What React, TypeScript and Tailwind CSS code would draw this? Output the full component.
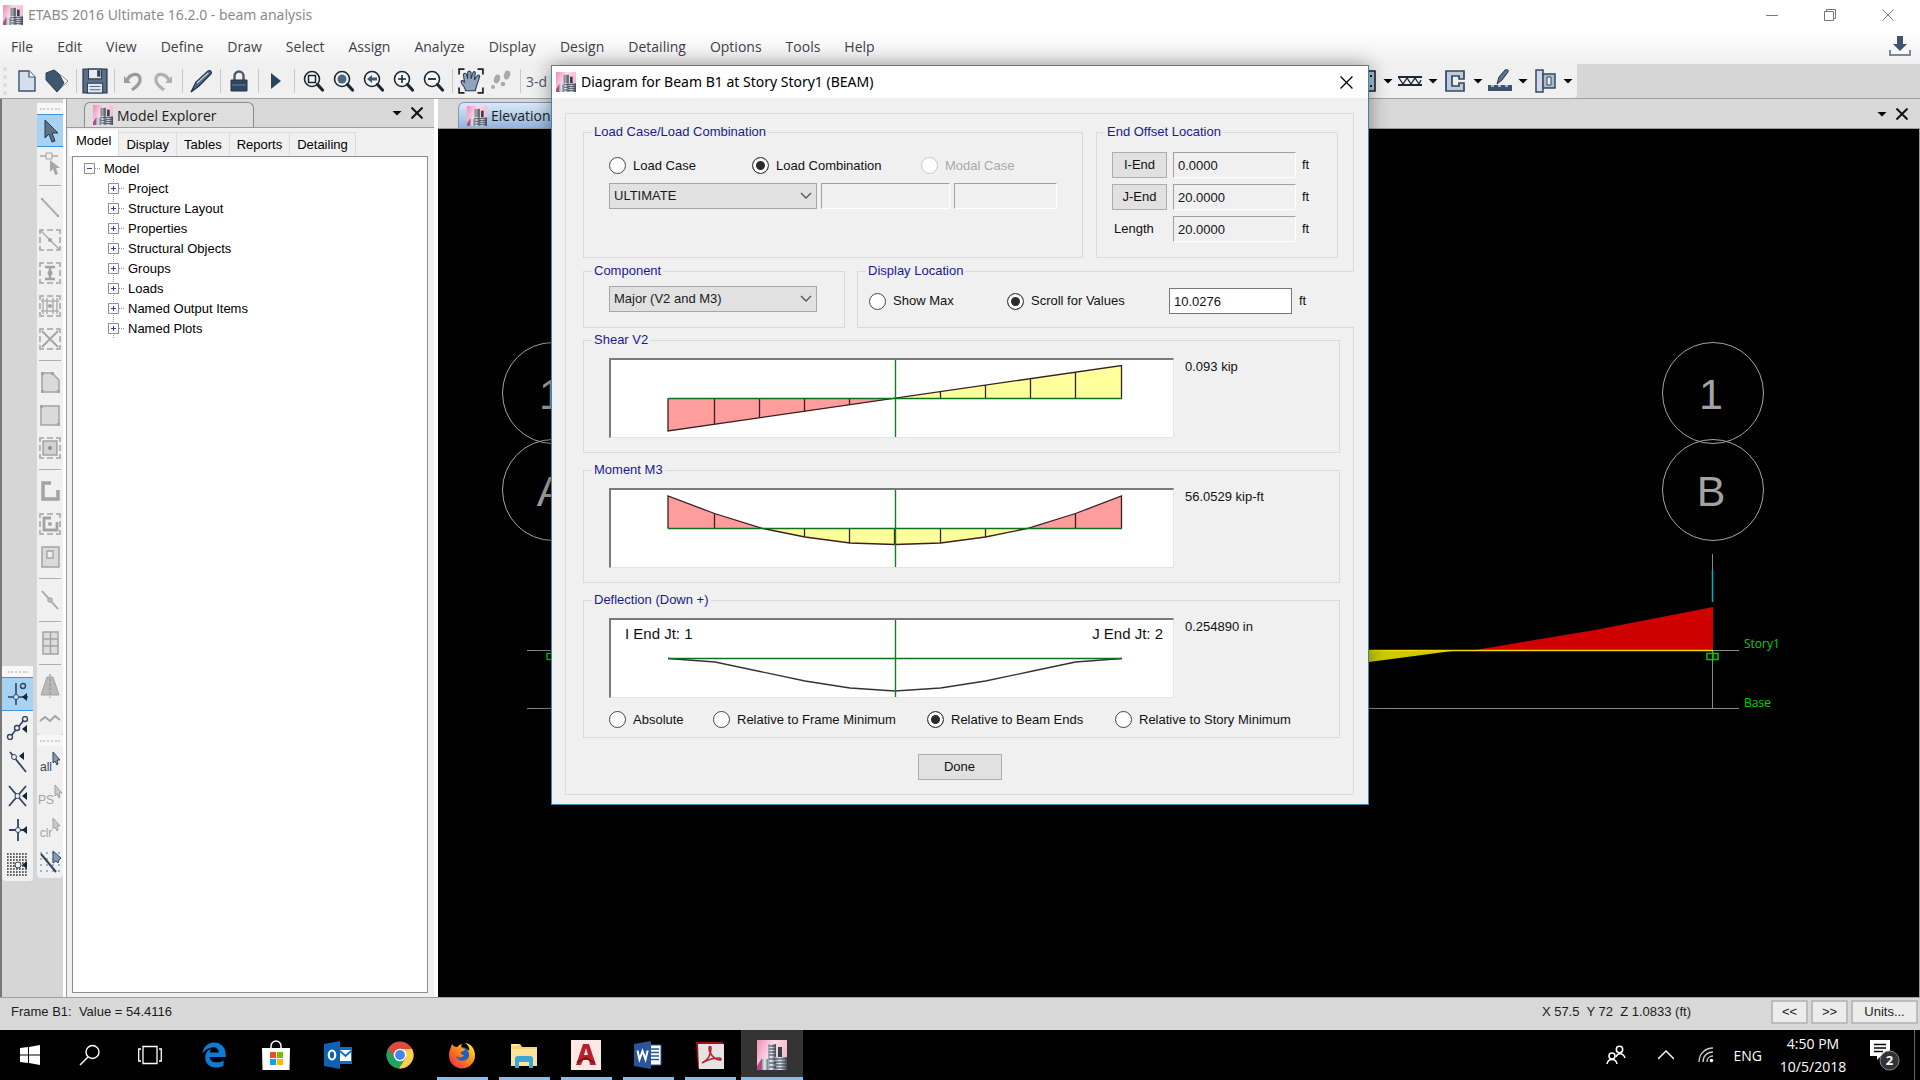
import type { ReactNode } from "react";
import { clsx } from "clsx";
import { FaEdgeLegacy } from "react-icons/fa6";

const MENUS = [
  "File", "Edit", "View", "Define", "Draw", "Select", "Assign", "Analyze",
  "Display", "Design", "Detailing", "Options", "Tools", "Help",
];
const EXPLORER_TABS = ["Model", "Display", "Tables", "Reports", "Detailing"];
const TREE_ITEMS = [
  "Project", "Structure Layout", "Properties", "Structural Objects",
  "Groups", "Loads", "Named Output Items", "Named Plots",
];

const NAVY = "#2f4560";
const GRAY = "#a3a3a3";

interface IconProps {
  children: ReactNode;
  size?: string;
  box?: string;
}

function Icon({ children, size = "h-6 w-6", box = "0 0 24 24" }: IconProps) {
  return (
    <svg viewBox={box} className={clsx("shrink-0", size)} fill="none" aria-hidden="true">
      {children}
    </svg>
  );
}

function EtabsLogo({ size = "h-5 w-5" }: { size?: string }) {
  return (
    <Icon size={size} box="0 0 30 30">
      <defs>
        <linearGradient id="logoPink" x1="0" y1="0" x2="1" y2="0.4">
          <stop offset="0" stopColor="#f08cb8" />
          <stop offset="0.5" stopColor="#fbdbe8" />
          <stop offset="1" stopColor="#f7b9d0" />
        </linearGradient>
        <linearGradient id="logoTower" x1="0" y1="0" x2="1" y2="0">
          <stop offset="0" stopColor="#8f9dad" />
          <stop offset="0.4" stopColor="#e8edf2" />
          <stop offset="1" stopColor="#4a525e" />
        </linearGradient>
      </defs>
      <rect width="30" height="30" fill="url(#logoPink)" />
      <path d="M0 26L5 18V30H0Z" fill="#b14c86" />
      <rect x="5" y="19" width="7" height="11" fill="url(#logoTower)" />
      <rect x="11" y="4" width="8" height="26" fill="url(#logoTower)" />
      <rect x="21" y="7" width="4" height="23" fill="#39404d" />
      <path d="M18 17h12v13H18z" fill="url(#logoTower)" />
      <path d="M12 6h7M12 9h7M12 12h7M12 15h7M12 19h7M12 23h7M12 27h7M18 19h12M18 22h12M18 25h12M18 28h12" stroke="#333b48" strokeWidth="1.2" />
    </Icon>
  );
}

function Caret() {
  return (
    <Icon size="h-2 w-3" box="0 0 12 8">
      <path d="M1.500 2h9L6 6.500Z" fill="#000" />
    </Icon>
  );
}

function Cross({ size = "h-3 w-3", color = "#111", width = 1.2 }: { size?: string; color?: string; width?: number }) {
  return (
    <Icon size={size} box="0 0 12 12">
      <path d="M0.500 0.500L11.500 11.500M11.500 0.500L0.500 11.500" stroke={color} strokeWidth={width} />
    </Icon>
  );
}

function Magnifier({ children }: { children: ReactNode }) {
  return (
    <Icon>
      <circle cx="11" cy="10" r="7.500" fill="#f4f7fa" stroke="#1d2733" strokeWidth="1.600" />
      <path d="M16.500 15.500L21.500 21" stroke="#1d2733" strokeWidth="3.200" strokeLinecap="round" />
      {children}
    </Icon>
  );
}

const MAIN_TOOLS: { name: string; icon: ReactNode; slot?: string; endsGroup?: boolean }[] = [
  {
    name: "New model",
    icon: <Icon><path d="M4 2h10l6 6v14H4z" fill="#d5dfeb" stroke="#3c536e" strokeWidth="1.400" /><path d="M14 2v6h6" fill="#fff" stroke="#3c536e" strokeWidth="1.200" /></Icon>,
  },
  {
    name: "Open",
    icon: <Icon><path d="M9 1l14 11-11 11-3-6z" fill="#f5f8fb" stroke="#7e90a3" /><path d="M1 4l8-3 5 4 5 9-7 9L1 11z" fill="#3f566f" stroke="#2b3e54" /></Icon>,
    endsGroup: true,
  },
  {
    name: "Save",
    icon: <Icon size="h-[26px] w-[26px]"><path d="M1 1h22v22H1z" fill="#5a7089" stroke="#2c3f55" strokeWidth="1.300" /><path d="M6 1h12v9H6z" fill="#e4ebf2" stroke="#2c3f55" /><path d="M14 2h3v6h-3z" fill="#2c3f55" /><path d="M5 14h14v9H5z" fill="#dfe7ef" stroke="#2c3f55" /><path d="M7 17h10M7 20h10" stroke="#5a7089" /></Icon>,
    endsGroup: true,
  },
  {
    name: "Undo",
    icon: <Icon><path d="M3 7v7h7z" fill="#9b9b9b" /><path d="M6 12C8 5 17 3 19 9c1 5-3 8-8 12" stroke="#9b9b9b" strokeWidth="3.200" /></Icon>,
  },
  {
    name: "Redo",
    icon: <Icon><path d="M21 7v7h-7z" fill="#b0b0b0" /><path d="M18 12C16 5 7 3 5 9c-1 5 3 8 8 12" stroke="#b0b0b0" strokeWidth="3.200" /></Icon>,
    endsGroup: true,
  },
  {
    name: "Edit",
    icon: <Icon><path d="M2 23l5-10L19 2c3-1 4 1 3 3L10 17z" fill="#516a85" stroke="#1d2f44" strokeWidth="1.200" /><path d="M8 14L19 4" stroke="#b9c8d8" strokeWidth="1.600" /></Icon>,
    endsGroup: true,
  },
  {
    name: "Lock model",
    icon: <Icon><path d="M7.500 11V7a4.500 4.500 0 019 0v4" stroke="#4e5a68" strokeWidth="2.400" /><path d="M4 11h16v11H4z" fill="#31465f" stroke="#22344a" /><path d="M5 16h14" stroke="#5b728c" strokeWidth="1.400" /></Icon>,
    endsGroup: true,
  },
  {
    name: "Run analysis",
    icon: <Icon><path d="M7 4l10 8-10 8z" fill="#29445f" /></Icon>,
    slot: "w-7",
    endsGroup: true,
  },
  { name: "Rubber band zoom", icon: <Magnifier><path d="M7.500 6.500h7v7h-7z" stroke="#1d2733" strokeWidth="1.500" /></Magnifier> },
  { name: "Full view", icon: <Magnifier><circle cx="11" cy="10" r="4.500" fill="#4d6580" /></Magnifier> },
  { name: "Previous zoom", icon: <Magnifier><path d="M6 10l5-4v2.500h5v3h-5V14z" fill="#3f5873" /></Magnifier> },
  { name: "Zoom in", icon: <Magnifier><path d="M7 10h8M11 6v8" stroke="#1d2733" strokeWidth="1.600" /></Magnifier> },
  { name: "Zoom out", icon: <Magnifier><path d="M7 10h8" stroke="#1d2733" strokeWidth="1.800" /></Magnifier>, endsGroup: true },
  {
    name: "Pan",
    icon: (
      <Icon size="h-[26px] w-[26px]">
        <path d="M1 6V1h5M18 1h5v5M23 18v5h-5M6 23H1v-5" stroke="#222" strokeWidth="1.600" />
        <path d="M7 21c0-4-5-6-4-9 1-1 2 0 3 1L5 6c1-2 2-1 3 0l1 4V4c1-2 2-1 3 0v6l2-6c1-1 2-1 2 1l-1 6 3-4c1-1 2 0 2 1l-3 9-1 4z" fill="#8fa4bb" stroke="#2b3d52" />
      </Icon>
    ),
  },
  {
    name: "Walk",
    icon: <Icon><g fill="#a9a9a9"><ellipse cx="8" cy="10" rx="3" ry="4.500" transform="rotate(20 8 10)" /><circle cx="4" cy="18" r="2" /><ellipse cx="18" cy="6" rx="3" ry="4.500" transform="rotate(20 18 6)" /><circle cx="14" cy="15" r="2.300" /></g></Icon>,
    endsGroup: true,
  },
];

const DRAW_TOOLS: { name: string; icon: ReactNode }[] = [
  { name: "Frame section", icon: <Icon><path d="M4 2h18v20H4z" fill="#a9c0d4" stroke="#16202c" strokeWidth="1.600" /><path d="M17 6h2v2h-2zM17 16h2v2h-2z" fill="#16202c" /></Icon> },
  { name: "Joist", icon: <Icon><path d="M0 8h24M0 16h24" stroke="#1c2733" strokeWidth="2" /><path d="M1 9l4 6 4-6 4 6 4-6 4 6 2-4" stroke="#1c2733" strokeWidth="1.300" /></Icon> },
  { name: "Channel", icon: <Icon><path d="M3 2h18v8h-5V7H9v10h7v-3h5v8H3z" fill="#bcccdc" stroke="#34485f" strokeWidth="1.700" /></Icon> },
  { name: "Wall pen", icon: <Icon><path d="M9 15l2-7 6-7c2-1 4 0 3 2l-6 8z" fill="#5d748d" stroke="#22344a" /><path d="M0 16h24v6H0z" fill="#3b536f" /><path d="M3 17h3M10 17h3M17 17h3" stroke="#c8d5e2" strokeWidth="1.400" /></Icon> },
  { name: "Panel", icon: <Icon><path d="M3 1h7v22H3z" fill="#d2d8ea" stroke="#34485f" strokeWidth="1.500" /><path d="M10 5h12v14H10z" fill="#a9bccd" stroke="#34485f" strokeWidth="1.500" /><path d="M14 8h4v8h-4z" fill="#e8eef4" stroke="#34485f" /></Icon> },
];

const DASHED_BOX = <path d="M2 6V2h4M9 2h6M18 2h4v4M22 9v6M22 18v4h-4M15 22H9M6 22H2v-4M2 15V9" stroke={GRAY} strokeWidth="1.500" />;

type SideTool = { name: string; icon: ReactNode; active?: boolean } | "separator";

const SIDE_TOOLS: SideTool[] = [
  { name: "Select", active: true, icon: <Icon><path d="M7 1v18l4-4 3 8 3-1-3-8h6z" fill="#5f7387" stroke="#2a3947" /></Icon> },
  { name: "Reshape", icon: <Icon><path d="M2 4h18" stroke={GRAY} strokeWidth="1.400" /><path d="M8 1h6v6H8z" fill="#eee" stroke={GRAY} /><path d="M12 8v12l3-3 2 6 3-1-2-6h4z" fill="#a8a8a8" /></Icon> },
  "separator",
  { name: "Draw line", icon: <Icon><path d="M4 4l16 17" stroke="#b0b0b0" strokeWidth="2" /><path d="M3 3h2v2H3zM19 20h2v2h-2z" fill={GRAY} /></Icon> },
  { name: "Quick line", icon: <Icon>{DASHED_BOX}<path d="M3 3l18 18" stroke="#adadad" strokeWidth="1.600" /><circle cx="12" cy="12" r="2" fill={GRAY} /></Icon> },
  { name: "Quick column", icon: <Icon>{DASHED_BOX}<path d="M7 6h10M7 18h10M12 6v12" stroke={GRAY} strokeWidth="2.400" /><circle cx="12" cy="12" r="2.500" fill={GRAY} /></Icon> },
  { name: "Secondary beams", icon: <Icon>{DASHED_BOX}<path d="M5 4v16M9 4v16M15 4v16M19 4v16M3 7h18M3 17h18" stroke="#b0b0b0" strokeWidth="1.500" /><circle cx="12" cy="12" r="2" fill={GRAY} /></Icon> },
  { name: "Brace", icon: <Icon>{DASHED_BOX}<path d="M4 4l16 16M20 4L4 20" stroke={GRAY} strokeWidth="1.800" /></Icon> },
  "separator",
  { name: "Draw floor", icon: <Icon><path d="M4 3h10l7 7v12H4z" fill="#dadada" stroke={GRAY} strokeWidth="1.500" /><path d="M3 2h3v3H3zM13 2h3v3h-3zM3 20h3v3H3zM19 20h3v3h-3z" fill={GRAY} /></Icon> },
  { name: "Rectangular floor", icon: <Icon><path d="M3 3h18v19H3z" fill="#dadada" stroke={GRAY} strokeWidth="1.500" /><path d="M2 2h3v3H2zM19 20h3v3h-3z" fill={GRAY} /></Icon> },
  { name: "Quick floor", icon: <Icon>{DASHED_BOX}<path d="M5 5h14v14H5z" fill="#d2d2d2" stroke={GRAY} strokeWidth="1.500" /><circle cx="12" cy="12" r="2" fill="#8c8c8c" /></Icon> },
  "separator",
  { name: "Draw wall", icon: <Icon><path d="M13 4H5v16h15v-9" stroke={GRAY} strokeWidth="3.500" /></Icon> },
  { name: "Quick wall", icon: <Icon>{DASHED_BOX}<path d="M13 6H6v12h13v-8" stroke={GRAY} strokeWidth="2.800" /><circle cx="12" cy="12" r="2" fill={GRAY} /></Icon> },
  { name: "Wall opening", icon: <Icon><path d="M4 2h17v20H4z" fill="#dadada" stroke={GRAY} strokeWidth="1.500" /><path d="M9 6h6v7H9z" fill="#eee" stroke={GRAY} strokeWidth="1.300" /></Icon> },
  "separator",
  { name: "Link", icon: <Icon><path d="M4 3l16 18" stroke={GRAY} strokeWidth="1.800" /><circle cx="12" cy="12" r="2.300" fill="#bbb" stroke={GRAY} /></Icon> },
  "separator",
  { name: "Grid", icon: <Icon><path d="M5 1h15v22H5zM5 8h15M5 15h15M12.500 1v22" fill="#ddd" stroke={GRAY} strokeWidth="1.500" /></Icon> },
  "separator",
  { name: "Tower", icon: <Icon><path d="M9 3h6l6 18H3z" fill="#b9b9b9" stroke={GRAY} /><path d="M12 0v24" stroke="#8c8c8c" strokeDasharray="3 1.500" /></Icon> },
  { name: "Wave", icon: <Icon><path d="M2 14l5-4 5 4 5-5 5 4" stroke={GRAY} strokeWidth="2" /></Icon> },
];

// Small cursor beside a short caption, used by the selection buttons.
function PickIcon({ label, color }: { label: string; color: string }) {
  return (
    <span className="flex h-6 w-6 items-end justify-center">
      <span className="text-[12px] leading-4" style={{ color }}>{label}</span>
      <Icon size="h-4 w-2 self-start" box="0 0 8 16">
        <path d="M1 1v11l2-2 2 4 1-1-1-4h3z" fill={color} fillOpacity="0.5" stroke={color} />
      </Icon>
    </span>
  );
}

const SELECT_TOOLS: SideTool[] = [
  { name: "Select all", icon: <PickIcon label="all" color={NAVY} /> },
  { name: "Previous selection", icon: <PickIcon label="PS" color={GRAY} /> },
  { name: "Clear selection", icon: <PickIcon label="clr" color={GRAY} /> },
  { name: "Intersecting line", icon: <Icon><path d="M2 3h20M2 9h20M2 15h20M2 21h20" stroke="#9db4cc" strokeWidth="2" strokeDasharray="2 4" /><path d="M3 4l15 18" stroke={NAVY} strokeWidth="2" /><path d="M15 1v12l3-2 2 2 1-3 2-2z" fill="#7f9bb8" stroke={NAVY} /></Icon> },
];

const SNAP_TOOLS: SideTool[] = [
  { name: "Snap to grid", active: true, icon: <Icon><path d="M10 1v22M2 15h20" stroke={NAVY} strokeWidth="1.600" /><circle cx="17" cy="4" r="2.500" stroke={NAVY} strokeWidth="1.400" /><circle cx="10" cy="15" r="2.500" fill="#cfe5fa" stroke={NAVY} /><path d="M16 15l5-4v8z" fill="#16263a" /></Icon> },
  { name: "Snap to ends", icon: <Icon><path d="M4 21L18 4" stroke={NAVY} strokeWidth="1.600" /><g fill="#f0f0f0" stroke={NAVY} strokeWidth="1.400"><circle cx="4" cy="21" r="2.500" /><circle cx="11" cy="12" r="2.500" /><circle cx="19" cy="3" r="2.500" /></g><path d="M16 13l5-4v8z" fill="#16263a" /></Icon> },
  { name: "Snap to line", icon: <Icon><path d="M4 2l16 20" stroke={NAVY} strokeWidth="1.800" /><circle cx="8" cy="7" r="2.500" fill="#f0f0f0" stroke={NAVY} /><path d="M13 6l5-4v8z" fill="#16263a" /></Icon> },
  { name: "Snap to intersection", icon: <Icon><path d="M3 2l17 20M20 2L3 22" stroke={NAVY} strokeWidth="1.800" /><circle cx="11.500" cy="12" r="2.500" fill="#f0f0f0" stroke={NAVY} /><path d="M16 12l5-4v8z" fill="#16263a" /></Icon> },
  { name: "Snap to perpendicular", icon: <Icon><path d="M12 1v22M3 12h18" stroke={NAVY} strokeWidth="1.800" /><circle cx="12" cy="12" r="2.500" fill="#f0f0f0" stroke={NAVY} /><path d="M16 12l5-4v8z" fill="#16263a" /></Icon> },
  { name: "Snap to fine grid", icon: <Icon><path d="M1 2h21M1 5h21M1 8h21M1 11h21M1 14h21M1 17h21M1 20h21M1 23h21" stroke="#333" strokeWidth="1.700" strokeDasharray="1.700 1.300" /><circle cx="12" cy="13" r="3" fill="#f0f0f0" stroke={NAVY} /><path d="M16 13l5-4v8z" fill="#16263a" /></Icon> },
];

function ToolColumn({ tools, slot }: { tools: SideTool[]; slot: string }) {
  return (
    <div className="flex flex-col rounded-b bg-[#f0f0f0]">
      <div className="flex h-[11px] items-center justify-center bg-[#f7f7f7]">
        <div className="w-5 border-t-2 border-dotted border-[#cfcfcf]" />
      </div>
      {tools.map((tool, i) =>
        tool === "separator" ? (
          <div key={i} className="flex h-2.5 items-center px-0.5">
            <div className="w-full border-t border-[#b0b0b0]" />
          </div>
        ) : (
          <button
            key={i}
            type="button"
            aria-label={tool.name}
            className={clsx(
              "flex items-center justify-center border-y",
              slot,
              tool.active ? "border-[#3d93d8] bg-[#a8d2f2]" : "border-transparent",
            )}
          >
            {tool.icon}
          </button>
        ),
      )}
    </div>
  );
}

function TitleBar() {
  return (
    <header className="flex h-[30px] items-center bg-white pl-[3px] font-['Noto_Sans',sans-serif]">
      <EtabsLogo />
      <h1 className="ml-[5px] flex-1 text-[14px] leading-5 text-[#8b8b8b]">ETABS 2016 Ultimate 16.2.0 - beam analysis</h1>
      <div className="flex items-center pr-[3px]">
        <button type="button" aria-label="Minimize" className="flex h-7 w-[58px] items-center justify-center">
          <span className="w-3 border-t border-[#777]" />
        </button>
        <button type="button" aria-label="Restore" className="flex h-7 w-[58px] items-center justify-center">
          <Icon size="h-3 w-3" box="0 0 12 12">
            <path d="M0.500 2.500h9v9h-9zM2.500 2.500v-2h9v9h-2" stroke="#777" />
          </Icon>
        </button>
        <button type="button" aria-label="Close" className="flex h-7 w-[58px] items-center justify-center">
          <Cross color="#777" width={1} />
        </button>
      </div>
    </header>
  );
}

function MenuBar() {
  return (
    <nav className="flex h-[34px] items-center gap-6 bg-linear-to-b from-white to-[#f0f0f0] pr-2 pb-0.5 pl-[11px] font-['Open_Sans',sans-serif] text-[14px] text-[#443c4a]">
      {MENUS.map((menu) => (
        <button key={menu} type="button">{menu}</button>
      ))}
      <button type="button" aria-label="Download" className="ml-auto">
        <Icon>
          <path d="M9 2h6v8h4l-7 7-7-7h4z" fill="#3e5470" />
          <path d="M2 16v5h20v-5" stroke="#7b8796" strokeWidth="2" />
        </Icon>
      </button>
    </nav>
  );
}

function Toolbar() {
  return (
    <div className="flex h-[35px] border-b border-[#9f9f9f] bg-[#d6d6d6]">
      <div className="flex flex-1 items-center rounded-br bg-[#f0f0f0]">
        <div className="ml-[3px] h-7 w-[9px] border-l-4 border-dotted border-[#dcdcdc]" />
        {MAIN_TOOLS.map((tool) => (
          <div key={tool.name} className="flex items-center">
            <button type="button" aria-label={tool.name} className={clsx("flex h-8 items-center justify-center", tool.slot ?? "w-[30px]")}>
              {tool.icon}
            </button>
            {tool.endsGroup && (
              <div className="flex w-2 justify-center">
                <div className="h-6 w-px bg-[#c9c9c9]" />
              </div>
            )}
          </div>
        ))}
        <button type="button" className="ml-0.5 font-['Open_Sans',sans-serif] text-[14px] text-[#4c5a6b]">3-d</button>
        <div className="ml-auto flex">
          {DRAW_TOOLS.map((tool) => (
            <button key={tool.name} type="button" aria-label={tool.name} className="flex items-center">
              <span className="flex w-[26px] justify-center">{tool.icon}</span>
              <span className="flex w-[19px] justify-center"><Caret /></span>
            </button>
          ))}
        </div>
      </div>
      <div className="w-[343px]" />
    </div>
  );
}

function TreeToggle({ open }: { open?: boolean }) {
  return (
    <Icon size="h-5 w-5" box="0 0 20 20">
      {!open && <path d="M5.500 0v20" stroke="#999" strokeDasharray="1 1" />}
      <path d="M0.500 4.500h10v10h-10z" fill="#fafafa" stroke="#8f8f8f" />
      <path d={open ? "M3 9.500h5" : "M3 9.500h5M5.500 7v5"} stroke="#2c4a9a" />
      <path d="M11 9.500h5" stroke="#999" strokeDasharray="1 1" />
    </Icon>
  );
}

function ModelExplorer() {
  return (
    <aside className="flex w-[368px] shrink-0 flex-col border-l border-[#9a9a9a] bg-[#f0f0f0]">
      <div className="flex h-[29px] items-end border-b border-[#9a9a9a] bg-[#d8d8d8] pl-[17px]">
        <div className="flex h-[25px] w-[170px] items-center gap-1 rounded-t-md border border-b-0 border-[#8a8a8a] bg-[#dedede] pl-2 font-['Open_Sans',sans-serif] text-[14px] text-[#1c1c1c]">
          <EtabsLogo />
          Model Explorer
        </div>
        <div className="ml-auto flex h-full items-center gap-2 pr-[11px]">
          <button type="button" aria-label="Window options"><Caret /></button>
          <button type="button" aria-label="Close panel"><Cross width={2} /></button>
        </div>
      </div>
      <div className="flex h-7 items-end pl-0.5 text-[13px] text-black">
        {EXPLORER_TABS.map((tab, i) => (
          <button
            key={tab}
            type="button"
            className={clsx(
              "border-r border-[#dcdcdc] px-[7px]",
              i === 0 ? "h-[26px] bg-white pb-1" : "h-6 border-t",
            )}
          >
            {tab}
          </button>
        ))}
      </div>
      <div className="mr-1.5 mb-1 ml-[5px] flex-1 border border-[#8a8d94] bg-white pt-0.5 pl-[11px] text-[13px] leading-5 text-black">
        <div className="flex items-center"><TreeToggle open />Model</div>
        <ul className="ml-6">
          {TREE_ITEMS.map((item) => (
            <li key={item} className="flex items-center"><TreeToggle />{item}</li>
          ))}
        </ul>
      </div>
    </aside>
  );
}

function GridBubble({ x, y, label }: { x: number; y: number; label: string }) {
  return (
    <g>
      <circle cx={x} cy={y} r="50.500" stroke="#a6a6a6" fill="none" />
      <text x={x - 2} y={y + 16} fontSize="43" textAnchor="middle" fill="#a3a3a3">{label}</text>
    </g>
  );
}

function ElevationView() {
  return (
    <section className="flex min-w-0 flex-1 flex-col">
      <div className="flex h-[30px] items-end border-b border-[#9a9a9a] bg-[#d8d8d8] pl-5">
        <div className="flex h-[26px] w-[190px] items-center gap-1 rounded-t-md border border-b-0 border-[#8197b3] bg-linear-to-b from-[#dbe9f8] to-[#92b4dc] pl-2 font-['Open_Sans',sans-serif] text-[14px] text-[#1c1c1c]">
          <EtabsLogo />
          Elevation
        </div>
        <div className="ml-auto flex h-full items-center gap-2 pr-3">
          <button type="button" aria-label="View options"><Caret /></button>
          <button type="button" aria-label="Close view"><Cross width={2} /></button>
        </div>
      </div>
      <div className="min-h-0 flex-1 border-r border-[#9a9a9a] bg-black">
        <svg viewBox="438 129 1481 868" className="h-full w-full" fill="none" fontFamily="Liberation Sans, sans-serif">
          <GridBubble x={553} y={393} label="1" />
          <GridBubble x={553} y={490} label="A" />
          <GridBubble x={1713} y={393} label="1" />
          <GridBubble x={1713} y={490} label="B" />
          <path d="M527 650.500H1739M527 708.500H1739M1712.500 554V570M1712.500 651V708" stroke="#8a8a8a" />
          <path d="M1712.500 570V602" stroke="#00b4b4" strokeWidth="1.500" />
          <path d="M1475 650L1595 630 1713 607V650Z" fill="#cf0000" />
          <path d="M1280 650H1460L1369 662 1280 668Z" fill="#cdcb00" />
          <path d="M553 650.500H1713" stroke="#f0d800" strokeWidth="1.500" />
          <g stroke="#00c800" strokeWidth="1.500">
            <path d="M547 653.500h11v6h-11zM1707 653.500h11v6h-11zM1713 652v9" />
          </g>
          <g fontSize="12" fontFamily="Open Sans, sans-serif" fill="#00d400">
            <text x="1744" y="648">Story1</text>
            <text x="1744" y="707">Base</text>
          </g>
        </svg>
      </div>
    </section>
  );
}

interface RadioProps {
  name: string;
  label: string;
  checked?: boolean;
  disabled?: boolean;
}

function Radio({ name, label, checked, disabled }: RadioProps) {
  return (
    <label className={clsx("flex items-center gap-[7px] whitespace-nowrap", disabled && "text-[#a9a9a9]")}>
      <input
        type="radio"
        name={name}
        defaultChecked={checked}
        disabled={disabled}
        className="h-[17px] w-[17px] shrink-0 appearance-none rounded-full border border-[#444] bg-white checked:bg-[#2b2b2b] checked:shadow-[inset_0_0_0_3px_white] disabled:border-[#c6c6c6]"
      />
      {label}
    </label>
  );
}

interface GroupProps {
  title: string;
  className?: string;
  body?: string;
  children: ReactNode;
}

function Group({ title, className, body, children }: GroupProps) {
  return (
    <fieldset className={clsx("min-w-0 border border-[#dadada]", className)}>
      <legend className="ml-2 px-0.5 leading-4 text-[#1a1a8c]">{title}</legend>
      <div className={body}>{children}</div>
    </fieldset>
  );
}

function Dropdown({ label, value }: { label: string; value: string }) {
  return (
    <div className="relative h-[26px] w-[208px] shrink-0">
      <select aria-label={label} className="h-full w-full appearance-none border border-[#a6a6a6] bg-[#e1e1e1] pl-1 leading-5 text-[#1a1a1a]">
        <option>{value}</option>
      </select>
      <svg viewBox="0 0 12 8" className="pointer-events-none absolute top-[9px] right-[5px] h-2 w-3" fill="none">
        <path d="M1 1l5 5 5-5" stroke="#555" strokeWidth="1.400" />
      </svg>
    </div>
  );
}

const SUNKEN = "h-[26px] border border-t-[#a0a0a0] border-r-white border-b-white border-l-[#a0a0a0] bg-[#f0f0f0] px-1";
const PUSH_BUTTON = "h-[26px] border border-[#adadad] bg-[#e1e1e1]";

function Plot({ label, children }: { label: string; children: ReactNode }) {
  return (
    <svg
      viewBox="2 2 562 77"
      role="img"
      aria-label={label}
      className="h-20 w-[565px] border-t-2 border-r border-b border-l-2 border-t-[#7a7a7a] border-r-[#e3e3e3] border-b-[#e3e3e3] border-l-[#7a7a7a] bg-white"
      fill="none"
    >
      {children}
      <path d="M286.500 0V80" stroke="#0f8020" strokeWidth="1.400" />
    </svg>
  );
}

interface ResultGroupProps {
  title: string;
  value: string;
  plot: ReactNode;
  className?: string;
  children?: ReactNode;
}

function ResultGroup({ title, value, plot, className, children }: ResultGroupProps) {
  return (
    <Group title={title} className={clsx("mr-[13px] ml-[17px]", className)} body="pt-2.5 pl-[25px]">
      <div className="flex gap-[11px]">
        {plot}
        <output className="leading-[18px]">{value}</output>
      </div>
      {children}
    </Group>
  );
}

function ShearPlot() {
  return (
    <Plot label="Shear V2 diagram">
      <path d="M59 40.500V73L286 40.500Z" fill="#ff9c9c" />
      <path d="M286 40.500L513 7.500V40.500Z" fill="#ffff9c" />
      <path d="M59 40.500V73L512.500 7.500V40.500M105.500 40.500V66M150.500 40.500V60M195.500 40.500V53.500M240.500 40.500V47M331.500 40.500V34M376.500 40.500V27.500M421.500 40.500V21M466.500 40.500V14.500" stroke="#3a2020" strokeWidth="1.300" />
      <path d="M59 40.500H513" stroke="#0f7020" strokeWidth="1.300" />
    </Plot>
  );
}

function MomentPlot() {
  return (
    <Plot label="Moment M3 diagram">
      <path d="M59 40.500V8L106 25.500 154 40.500ZM513 40.500V8L466.500 25.500 418 40.500Z" fill="#ff9c9c" />
      <path d="M154 40.500L196 49 241 55 286 56.500 331.500 55 376.500 49 418 40.500Z" fill="#ffff9c" />
      <path d="M59 40.500V8L105.500 25.500 154 40.500 196 49 241 55 286 56.500 331.500 55 376.500 49 418 40.500 466.500 25.500 512.500 8V40.500M105.500 25.500V40.500M466.500 25.500V40.500M195.500 40.500V49M240.500 40.500V55M285.500 40.500V56.500M331.500 40.500V55M376.500 40.500V49" stroke="#3a2020" strokeWidth="1.300" />
      <path d="M59 40.500H513" stroke="#0f7020" strokeWidth="1.300" />
    </Plot>
  );
}

function DeflectionPlot() {
  return (
    <Plot label="Deflection diagram">
      <path d="M59 40.500L106 44 151 53.500 196 63 241 70 286 73 331.500 70 376.500 63 421.500 53.500 466.500 44 513 40.500" stroke="#333" strokeWidth="1.300" />
      <path d="M59 40.500H513" stroke="#0f7020" strokeWidth="1.300" />
      <g fontSize="15" fontFamily="Liberation Sans, sans-serif" fill="#111">
        <text x="16" y="21">I End Jt: 1</text>
        <text x="554" y="21" textAnchor="end">J End Jt: 2</text>
      </g>
    </Plot>
  );
}

function BeamDialog() {
  return (
    <div
      role="dialog"
      aria-label="Diagram for Beam B1"
      className="absolute top-[65px] left-[551px] w-[818px] border border-[#3f87a8] bg-[#f0f0f0] text-[13px] text-[#111] shadow-[0_0_18px_rgba(0,0,0,0.4)]"
    >
      <div className="flex h-8 items-center gap-[5px] bg-white pr-[15px] pl-1 font-['Noto_Sans',sans-serif] text-[14px] text-black">
        <EtabsLogo />
        <h2 className="flex-1 pb-0.5">Diagram for Beam B1 at Story Story1 (BEAM)</h2>
        <button type="button" aria-label="Close dialog"><Cross size="h-[13px] w-[13px]" color="#000" /></button>
      </div>

      <div className="mt-[15px] mr-[14px] mb-[9px] ml-[13px] flex flex-col border border-[#dcdcdc] pt-2.5 pb-[14px]">
        <div className="flex gap-[13px] pl-[17px]">
          <Group title="Load Case/Load Combination" className="h-[134px] w-[500px]" body="pt-4 pl-[25px]">
            <div className="grid grid-cols-[143px_169px_auto]">
              <Radio name="caseType" label="Load Case" />
              <Radio name="caseType" label="Load Combination" checked />
              <Radio name="caseType" label="Modal Case" disabled />
            </div>
            <div className="mt-[7px] flex gap-1">
              <Dropdown label="Load combination" value="ULTIMATE" />
              <input aria-label="Step type" disabled className={clsx(SUNKEN, "w-[129px]")} />
              <input aria-label="Step number" disabled className={clsx(SUNKEN, "w-[103px]")} />
            </div>
          </Group>
          <Group title="End Offset Location" className="w-[242px]" body="pt-3 pl-[15px]">
            <div className="grid grid-cols-[55px_123px_auto] items-center gap-x-1.5 gap-y-1.5">
              <button type="button" className={PUSH_BUTTON}>I-End</button>
              <input aria-label="I-End offset" readOnly defaultValue="0.0000" className={SUNKEN} />
              <span>ft</span>
              <button type="button" className={PUSH_BUTTON}>J-End</button>
              <input aria-label="J-End offset" readOnly defaultValue="20.0000" className={SUNKEN} />
              <span>ft</span>
              <label htmlFor="length" className="pl-0.5">Length</label>
              <input id="length" readOnly defaultValue="20.0000" className={SUNKEN} />
              <span>ft</span>
            </div>
          </Group>
        </div>

        <div className="mt-[5px] -mr-px flex gap-3 pl-[17px]">
          <Group title="Component" className="h-[65px] w-[262px]" body="pt-[7px] pl-[25px]">
            <Dropdown label="Component" value="Major (V2 and M3)" />
          </Group>
          <Group title="Display Location" className="relative flex-1 border-r-0 bg-[#f0f0f0]" body="pt-[9px] pl-[11px]">
            <div className="grid grid-cols-[138px_162px_130px_auto] items-center">
              <Radio name="displayLocation" label="Show Max" />
              <Radio name="displayLocation" label="Scroll for Values" checked />
              <input aria-label="Distance" defaultValue="10.0276" className="h-[26px] w-[123px] border border-[#777] bg-white px-1" />
              <span>ft</span>
            </div>
          </Group>
        </div>

        <ResultGroup title="Shear V2" value="0.093 kip" className="mt-1 pb-[14px]" plot={<ShearPlot />} />
        <ResultGroup title="Moment M3" value="56.0529 kip-ft" className="mt-[9px] pb-[14px]" plot={<MomentPlot />} />
        <ResultGroup title="Deflection (Down +)" value="0.254890 in" className="mt-[9px] pb-[7px]" plot={<DeflectionPlot />}>
          <div className="mt-3 grid grid-cols-[104px_214px_188px_auto]">
            <Radio name="deflection" label="Absolute" />
            <Radio name="deflection" label="Relative to Frame Minimum" />
            <Radio name="deflection" label="Relative to Beam Ends" checked />
            <Radio name="deflection" label="Relative to Story Minimum" />
          </div>
        </ResultGroup>

        <button type="button" className={clsx(PUSH_BUTTON, "mt-4 w-[84px] self-center")}>Done</button>
      </div>
    </div>
  );
}

function StatusBar() {
  const button = "h-6 border-2 border-[#bcbcbc] bg-[#ececec]";
  return (
    <footer className="flex h-[33px] items-start border-t border-[#a0a0a0] bg-[#d8d8d8] pt-[2px] pr-0.5 pl-[11px] text-[13px] leading-5 text-[#1c1c1c]">
      <span className="flex-1 whitespace-pre pt-0.5">Frame B1:  Value = 54.4116</span>
      <span className="mr-20 whitespace-pre pt-0.5">X 57.5  Y 72  Z 1.0833 (ft)</span>
      <div className="flex gap-[3px]">
        <button type="button" className={clsx(button, "w-[37px]")}>&lt;&lt;</button>
        <button type="button" className={clsx(button, "w-[37px]")}>&gt;&gt;</button>
        <button type="button" className={clsx(button, "w-[67px]")}>Units...</button>
      </div>
    </footer>
  );
}

const SYSTEM_APPS = [
  { name: "Start", icon: <Icon size="h-[22px] w-[22px]" box="0 0 22 22"><path d="M1 4l8-1v7.500H1zM10 3l11-2v9.500H10zM1 11.500h8V19l-8-1zM10 11.500h11V21l-11-2z" fill="#fff" /></Icon> },
  { name: "Search", icon: <Icon size="h-[22px] w-[22px]" box="0 0 22 22"><circle cx="13.500" cy="8" r="6.500" stroke="#fff" strokeWidth="1.400" /><path d="M9 13l-8 8" stroke="#fff" strokeWidth="1.400" /></Icon> },
  { name: "Task view", icon: <Icon box="0 0 24 24"><path d="M5 3.500h14v17H5zM3 6H.700v12H3M21 6h2.300v12H21" stroke="#fff" strokeWidth="1.300" /></Icon> },
];

const APPS = [
  { name: "Edge", icon: <FaEdgeLegacy className="h-[26px] w-[26px] text-[#0f7bd4]" /> },
  {
    name: "Store",
    icon: <Icon size="h-[30px] w-[30px]" box="0 0 30 30"><path d="M10 8V6a5 5 0 0110 0v2" stroke="#fff" strokeWidth="1.500" /><path d="M1 8h28l-.500 22H1.500z" fill="#fff" /><path d="M9 12h6v6H9z" fill="#e8502a" /><path d="M16 12h6v6h-6z" fill="#7fb900" /><path d="M9 19h6v6H9z" fill="#12a2e8" /><path d="M16 19h6v6h-6z" fill="#fcb800" /></Icon>,
  },
  {
    name: "Outlook",
    icon: <Icon size="h-7 w-7" box="0 0 28 28"><path d="M13 6h15v17H13z" fill="#0f6fc6" /><path d="M16 9h11v11H16z" fill="#fff" /><path d="M16 10l5.500 5 5.500-5" stroke="#0f6fc6" strokeWidth="1.800" /><path d="M0 3l16-3v28L0 25z" fill="#0d62b3" /><ellipse cx="8" cy="14" rx="3.200" ry="4.500" stroke="#fff" strokeWidth="2.200" /></Icon>,
  },
  {
    name: "Chrome",
    icon: <Icon size="h-7 w-7" box="0 0 28 28"><circle cx="14" cy="14" r="13.500" fill="#de4b3c" /><path d="M2.300 7.300A13.500 13.500 0 0013 27.500L19.500 17 8.500 17z" fill="#1da462" /><path d="M14 8h12.100A13.500 13.500 0 0113 27.500l7-11z" fill="#fdd04a" /><circle cx="14" cy="14" r="6.300" fill="#fff" /><circle cx="14" cy="14" r="4.900" fill="#4285f0" /></Icon>,
  },
  {
    name: "Firefox",
    running: true,
    icon: (
      <Icon size="h-7 w-7" box="0 0 28 28">
        <defs><linearGradient id="fox" x1="1" y1="0" x2="0" y2="1"><stop offset="0.100" stopColor="#ffe226" /><stop offset="0.450" stopColor="#ff8a16" /><stop offset="1" stopColor="#e3214f" /></linearGradient></defs>
        <circle cx="14" cy="15" r="9" fill="#1f5fc0" />
        <path d="M3 6c0-1 1-2 1-3 1 2 3 3 5 3 2-2 4-3 5-3-1 2-1 3 0 4l3 1c0 2-3 2-4 3-1 2 1 3 3 3-1 3-6 3-8 1 1 4 6 6 10 4s4-7 1-10c1 0 2 0 2 1 1-3-1-6-4-8 5 0 10 5 10 12a13 13 0 01-26 1c0-4 1-7 2-9z" fill="url(#fox)" />
      </Icon>
    ),
  },
  {
    name: "File Explorer",
    running: true,
    icon: <Icon size="h-7 w-7" box="0 0 28 28"><path d="M1 3h9l2 3h15v19H1z" fill="#f9d56e" /><path d="M2 4h6" stroke="#fff3c4" strokeWidth="1.500" /><path d="M1 8h26v17H1z" fill="#fbe39a" /><path d="M5 27v-9c0-2 1-3 3-3h12c2 0 3 1 3 3v9h-4v-6H9v6z" fill="#38a7d8" /></Icon>,
  },
  {
    name: "AutoCAD",
    running: true,
    icon: <Icon size="h-[30px] w-[30px]" box="0 0 30 30"><path d="M0 0h30v30H0z" fill="#fbe9e6" /><path d="M5 25L12 4h6l7 21h-6l-1-5h-6l-2 5zM13 15h4l-2-7z" fill="#b9202c" fillRule="evenodd" /><path d="M6 22l9-4 9 5" stroke="#7d101b" strokeWidth="1.600" /></Icon>,
  },
  {
    name: "Word",
    running: true,
    icon: <Icon size="h-7 w-7" box="0 0 28 28"><path d="M14 4h13v20H14z" fill="#fff" stroke="#2a5699" /><path d="M16 8h9M16 11.500h9M16 15h9M16 18.500h9" stroke="#2a5699" strokeWidth="1.600" /><path d="M0 3l17-3v28L0 25z" fill="#2a5699" /><path d="M3.500 9.500l2 9L8.500 10l3 8.500 2.200-9" stroke="#fff" strokeWidth="2" /></Icon>,
  },
  {
    name: "Acrobat",
    running: true,
    icon: <Icon size="h-7 w-7" box="0 0 28 28"><path d="M0 1h27l1 26H2z" fill="#a31219" /><path d="M2 3h26v25H3z" fill="#e6e4e2" /><path d="M6 22c6-3 9-9 9-15 0-2-2-2-2 0 0 6 6 12 11 12 2 0 1-2-1-2-5 0-12 2-17 5z" stroke="#b5202a" strokeWidth="1.600" /></Icon>,
  },
  { name: "ETABS", running: true, active: true, icon: <EtabsLogo size="h-[30px] w-[30px]" /> },
];

function Taskbar() {
  return (
    <div className="flex h-[50px] bg-black font-['Open_Sans',sans-serif] text-white">
      {SYSTEM_APPS.map((app) => (
        <button key={app.name} type="button" aria-label={app.name} className="flex w-[60px] items-center justify-center">
          {app.icon}
        </button>
      ))}
      <div className="ml-[3px] flex">
        {APPS.map((app) => (
          <button
            key={app.name}
            type="button"
            aria-label={app.name}
            className={clsx("flex w-[62px] flex-col items-center", app.active && "bg-[#343434]")}
          >
            <span className="flex flex-1 items-center">{app.icon}</span>
            <span className={clsx("-mt-[3px] h-[3px]", app.running && "bg-[#86bdf0]", app.active ? "w-full" : "w-[51px]")} />
          </button>
        ))}
      </div>
      <div className="ml-auto flex items-center">
        <button type="button" aria-label="People" className="mr-8">
          <Icon size="h-5 w-5" box="0 0 20 20">
            <g stroke="#fff" strokeWidth="1.500"><circle cx="13.500" cy="4.500" r="3.200" /><circle cx="6" cy="11" r="3" /><path d="M10 12c1-4 7-5 9 1M1 19c1-6 9-6 10 0" /></g>
          </Icon>
        </button>
        <button type="button" aria-label="Show hidden icons" className="mr-6">
          <Icon size="h-4 w-4" box="0 0 16 16"><path d="M0 12l8-8 8 8" stroke="#fff" strokeWidth="1.400" /></Icon>
        </button>
        <button type="button" aria-label="Wi-Fi" className="mr-5">
          <Icon size="h-4 w-4" box="0 0 16 16">
            <path d="M1 15C1 7 7 1 15 1M5 15c0-6 4-10 10-10M9 15c0-3 2-6 6-6" stroke="#ccc" strokeWidth="1.300" />
            <circle cx="13.500" cy="13.500" r="1.800" fill="#fff" />
          </Icon>
        </button>
        <span className="mr-4 text-[14px]">ENG</span>
        <div className="w-[70px] text-center text-[14px] leading-[23px]">
          <div>4:50 PM</div>
          <div>10/5/2018</div>
        </div>
        <button type="button" aria-label="Notifications" className="mr-[13px] ml-[21px]">
          <Icon size="h-[32px] w-[32px]" box="0 0 32 32">
            <path d="M1 1h20v16H12l-4 4v-4H1z" fill="#fff" />
            <path d="M5 5.500h12M5 9h12M5 12.500h9" stroke="#000" strokeWidth="1.300" />
            <circle cx="20.500" cy="21.500" r="9.500" fill="#333" stroke="#888" />
            <text x="20.500" y="26" fontSize="13" fontWeight="700" textAnchor="middle" fill="#fff">2</text>
          </Icon>
        </button>
        <div className="mr-[5px] h-full w-px bg-[#666]" />
      </div>
    </div>
  );
}

export default function App() {
  return (
    <div className="relative flex h-screen flex-col overflow-hidden bg-[#d6d6d6] font-['Liberation_Sans',Arial,sans-serif]">
      <TitleBar />
      <MenuBar />
      <Toolbar />
      <main className="flex min-h-0 flex-1">
        <div className="flex shrink-0 items-start gap-1 border-l-2 border-[#777]">
          <div className="mt-[567px] w-[31px]">
            <ToolColumn tools={SNAP_TOOLS} slot="h-[34px]" />
          </div>
          <div className="w-[26px] pt-1">
            <ToolColumn tools={SIDE_TOOLS} slot="h-[33px]" />
            <ToolColumn tools={SELECT_TOOLS} slot="h-[33px]" />
          </div>
        </div>
        <div className="w-[3px] shrink-0 bg-white" />
        <ModelExplorer />
        <div className="w-1 shrink-0 bg-white" />
        <ElevationView />
      </main>
      <StatusBar />
      <Taskbar />
      <BeamDialog />
    </div>
  );
}
